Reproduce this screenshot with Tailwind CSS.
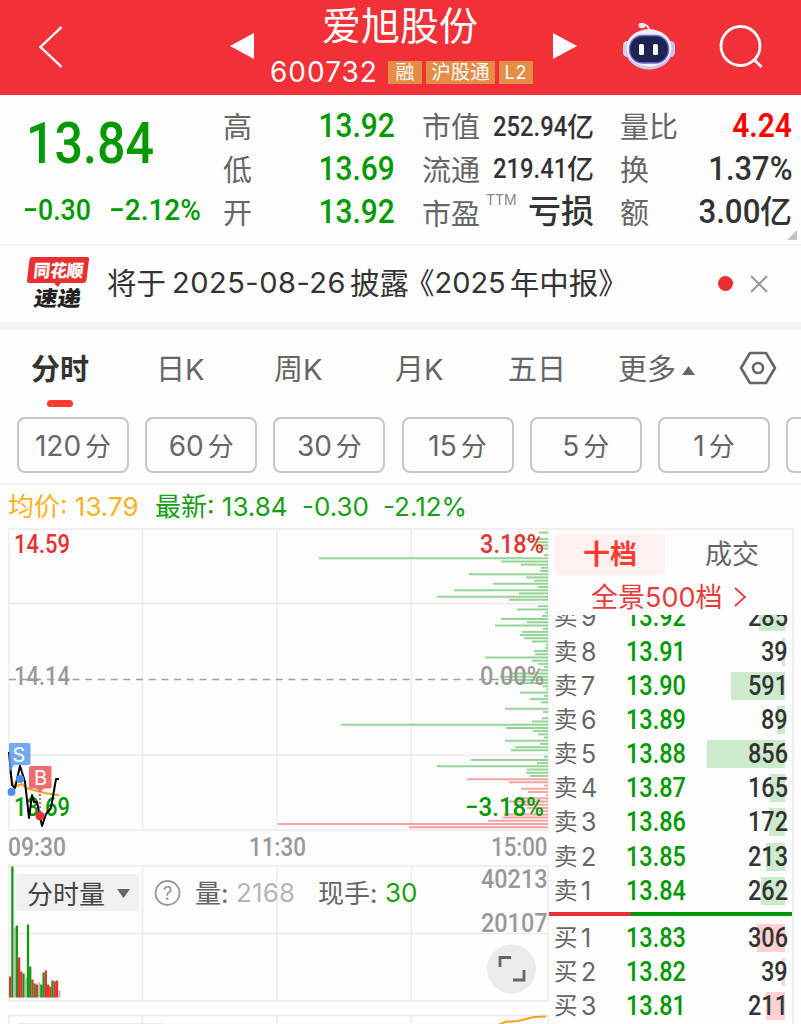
<!DOCTYPE html>
<html lang="zh-CN">

<head>
    <meta charset="UTF-8">
    <meta name="viewport" content="width=device-width, initial-scale=1.0">
    <title>爱旭股份 600732</title>
    <script src="https://cdn.jsdelivr.net/npm/@tailwindcss/browser@4"></script>
</head>

<body class="w-[801px] h-[1024px] overflow-hidden bg-[#fdfdfd] text-[#666] font-['Inter','Noto_Sans_CJK_SC',sans-serif] whitespace-nowrap">
    <!-- Header -->
    <header class="h-[95px] bg-[#f23038] text-white flex">
        <div class="w-[230px] pl-[38px] pt-[25px]">
            <svg class="w-6 h-11" viewBox="0 0 24 44" fill="none" stroke="currentColor" stroke-width="2.4">
                <path d="M23.500 2 2.500 22 23.500 42"></path>
            </svg>
        </div>
        <svg class="w-6 h-7 mt-8" viewBox="0 0 24 28" fill="currentColor">
            <path d="M0 14 24 1V27Z"></path>
        </svg>
        <div class="w-[299px] flex flex-col items-center">
            <h1 class="text-[39px] leading-[52px] h-[50px] ml-[-7px]">爱旭股份</h1>
            <div class="flex items-center h-11 self-start pl-4">
                <span class="w-[118px] text-[28px] leading-[44px] tracking-[1px]">600732</span>
                <span class="w-[34px] h-[23px] leading-[23px] text-center text-[19px] bg-[#e38d46]">融</span>
                <span class="w-[69px] h-[23px] leading-[23px] text-center text-[19.500px] bg-[#e38d46] ml-1">沪股通</span>
                <span class="w-[34px] h-[23px] leading-[23px] text-center text-[18px] tracking-[1px] bg-[#e38d46] ml-1">L2</span>
            </div>
        </div>
        <svg class="w-6 h-7 mt-8" viewBox="0 0 24 28" fill="currentColor">
            <path d="M0 1 24 14 0 27Z"></path>
        </svg>
        <!-- Assistant robot -->
        <svg class="w-[52px] h-[50px] ml-[46px] mt-[21px]" viewBox="0 0 52 50">
            <path d="M19 4Q26 3 26 10" fill="none" stroke="#f1ecfa" stroke-width="2"></path>
            <ellipse cx="19" cy="4.500" rx="3.500" ry="2.800" fill="#e9e2f8"></ellipse>
            <rect x="0" y="20" width="10" height="16" rx="4.500" fill="#d5d2f2"></rect>
            <rect x="42" y="20" width="10" height="16" rx="4.500" fill="#c5c2ee"></rect>
            <ellipse cx="26" cy="28.500" rx="23.500" ry="20" fill="#c9c7ee"></ellipse>
            <ellipse cx="26" cy="27" rx="22.500" ry="18.800" fill="#f1effb"></ellipse>
            <rect x="6.500" y="14.500" width="39" height="27.500" rx="13" fill="#1c2450" stroke="#7568e0" stroke-width="1.300"></rect>
            <rect x="16" y="23" width="5" height="11" rx="1.500" fill="#fff"></rect>
            <rect x="30" y="23" width="5" height="11" rx="1.500" fill="#fff"></rect>
        </svg>
        <svg class="w-11 h-11 ml-11 mt-[25px]" viewBox="0 0 44 44" fill="none" stroke="currentColor" stroke-width="2.800">
            <circle cx="21.500" cy="21" r="19.500"></circle>
            <path d="M34.500 34 42.500 42"></path>
        </svg>
    </header>

    <!-- Quote summary -->
    <section class="relative h-[151px] border-b-2 border-[#f1f1f1] flex text-[29px] leading-[43px]">
        <div class="w-[223px] pl-[23px] font-['Roboto'] font-medium text-[#009900]">
            <div class="pt-[9px] pl-[3px] h-[94px] leading-[80px] text-[57px]"><span class="inline-block origin-left scale-x-[.88]">13.84</span></div>
            <div class="flex h-[43px] text-[29px]">
                <span class="w-[86px]"><span class="inline-block origin-left scale-x-[.92]">−0.30</span></span>
                <span class="inline-block origin-left scale-x-[.965]">−2.12%</span>
            </div>
        </div>
        <div class="w-[172px] pt-[9px]">
            <div class="flex justify-between"><span class="pt-0.5 h-[43px]">高</span><span class="font-['Roboto'] font-medium text-[34px] text-[#009900] origin-right scale-x-[.88]">13.92</span></div>
            <div class="flex justify-between"><span class="pt-0.5 h-[43px]">低</span><span class="font-['Roboto'] font-medium text-[34px] text-[#009900] origin-right scale-x-[.88]">13.69</span></div>
            <div class="flex justify-between"><span class="pt-0.5 h-[43px]">开</span><span class="font-['Roboto'] font-medium text-[34px] text-[#009900] origin-right scale-x-[.88]">13.92</span></div>
        </div>
        <div class="w-[172px] ml-[27px] pt-2.5">
            <div class="flex h-[43px]"><span class="mr-auto pt-px">市值</span><span class="pt-px font-['Roboto'] font-medium text-[27px] text-[#333] origin-right scale-x-[.88]">252.94</span><span class="text-[27px] font-medium text-[#333] pt-px">亿</span></div>
            <div class="flex h-[43px]"><span class="mr-auto pt-px">流通</span><span class="font-['Roboto'] font-medium text-[27px] text-[#333] origin-right scale-x-[.88]">219.41</span><span class="text-[27px] font-medium text-[#333]">亿</span></div>
            <div class="flex h-[43px]"><span class="pt-0.5">市盈</span><span class="text-[14px] leading-[18px] ml-1.5 -mr-2 text-[#888]">TTM</span><span class="ml-auto -mt-px text-[33px] font-medium text-[#333]">亏损</span></div>
        </div>
        <div class="w-[172px] ml-[26px] pt-[9px]">
            <div class="flex h-[43px]"><span class="mr-auto pt-0.5">量比</span><span class="font-['Roboto'] font-semibold text-[34px] text-[#ff0000] origin-right scale-x-[.88]">4.24</span></div>
            <div class="flex h-[43px]"><span class="mr-auto pt-0.5">换</span><span class="font-['Roboto'] font-medium text-[34px] text-[#333] origin-right scale-x-[.91]">1.37%</span></div>
            <div class="flex h-[43px]"><span class="mr-auto pt-0.5">额</span><span class="font-['Roboto'] font-medium text-[34px] text-[#333] origin-right scale-x-[.92]">3.00</span><span class="text-[32px] font-medium text-[#333]">亿</span></div>
        </div>
        <svg class="absolute right-1 bottom-1 w-2.5 h-2.5" viewBox="0 0 10 10" fill="#c4c4c4">
            <path d="M10 0V10H0Z"></path>
        </svg>
    </section>

    <!-- Announcement -->
    <section class="h-[84px] border-b-[8px] border-[#f3f3f3] flex items-center pb-[1px]">
        <svg class="w-[64px] h-[54px] ml-[26px] mt-[-2px]" viewBox="0 0 64 54" font-family="Noto Sans CJK SC" font-weight="900">
            <path d="M6 1H61Q63.500 1 63 3.500L60.500 24Q60 27 57 27H35L31.500 31 28 27H3Q.500 27 1 24L3.500 3.500Q4 1 6 1Z" fill="#e93030"></path>
            <text transform="translate(7 20.500) skewX(-6)" font-size="17.500" fill="#fff" textLength="50" lengthAdjust="spacingAndGlyphs">同花顺</text>
            <text transform="translate(7 49.500) skewX(-9)" font-size="21" fill="#222" textLength="47" lengthAdjust="spacingAndGlyphs">速递</text>
        </svg>
        <p class="ml-[17px] text-[29.500px] text-[#333] flex"><span>将于</span><span class="ml-1.5 text-[29px] tracking-[0.5px]">2025-08-26</span><span class="ml-1">披露</span><span class="-ml-1">《</span><span class="text-[29px]">2025</span><span class="ml-1">年中报》</span></p>
        <span class="ml-auto w-[15px] h-[15px] rounded-full bg-[#e93030]"></span>
        <svg class="w-[18px] h-[18px] ml-[17px] mr-[33px]" viewBox="0 0 18 18" fill="none" stroke="#999" stroke-width="2">
            <path d="M1 1 17 17M17 1 1 17"></path>
        </svg>
    </section>

    <!-- Period tabs -->
    <nav class="h-[76px] flex text-[29px] leading-[80px]">
        <div class="relative w-[126px] pl-[31px] font-bold text-[#333]">分时<span class="absolute left-[47px] top-[70px] w-[26px] h-[7px] rounded-full bg-[#ff3b30]"></span></div>
        <div class="w-[148px] pl-[30px]">日K</div>
        <div class="w-[121px]">周K</div>
        <div class="w-[113px]">月K</div>
        <div class="w-[110px]">五日</div>
        <div class="flex items-center h-20">更多
            <svg class="w-[13px] h-[9px] ml-1.5" viewBox="0 0 13 9" fill="#666"><path d="M6.500 0 13 9H0Z"></path></svg>
        </div>
        <svg class="w-[38px] h-[34px] ml-11 mt-[21px]" viewBox="0 0 38 34" fill="none" stroke="#666" stroke-width="2.600" stroke-linejoin="round">
            <path d="M11 2H27L36 17 27 32H11L2 17Z"></path>
            <circle cx="19" cy="17" r="5"></circle>
        </svg>
    </nav>

    <!-- Minute chips -->
    <div class="h-[79px] overflow-hidden border-b-2 border-[#f1f1f1] pl-[17px] pt-[11px] flex gap-[16.2px] text-[28px] leading-[54px] text-center">
        <div class="shrink-0 w-[112px] h-14 border-2 border-[#c6c6c6] rounded-lg">120<span class="ml-1 text-[26px]">分</span></div>
        <div class="shrink-0 w-[112px] h-14 border-2 border-[#c6c6c6] rounded-lg">60<span class="ml-1 text-[26px]">分</span></div>
        <div class="shrink-0 w-[112px] h-14 border-2 border-[#c6c6c6] rounded-lg">30<span class="ml-1 text-[26px]">分</span></div>
        <div class="shrink-0 w-[112px] h-14 border-2 border-[#c6c6c6] rounded-lg">15<span class="ml-1 text-[26px]">分</span></div>
        <div class="shrink-0 w-[112px] h-14 border-2 border-[#c6c6c6] rounded-lg">5<span class="ml-1 text-[26px]">分</span></div>
        <div class="shrink-0 w-[112px] h-14 border-2 border-[#c6c6c6] rounded-lg">1<span class="ml-1 text-[26px]">分</span></div>
        <div class="w-[15px] h-14 border-2 border-r-0 border-[#c6c6c6] rounded-l-lg"></div>
    </div>

    <!-- Price line -->
    <div class="h-[43px] pl-2 flex text-[26px] leading-[44px] text-[#16a016]">
        <span class="w-[147px] text-[#fdb022]">均价: 13.79</span>
        <span class="w-[147px]">最新: 13.84</span>
        <span class="w-[81px]">-0.30</span>
        <span>-2.12%</span>
    </div>

    <main class="flex h-[496px]">
        <!-- Charts -->
        <svg class="w-[549px] h-[496px] shrink-0" viewBox="0 528 549 496" font-family="Roboto" font-weight="500" font-size="26">
            <g fill="none" stroke="#ebebeb" stroke-width="1.500">
                <path d="M9 529H548V830H9ZM9 603.500H548M9 755H548M142.500 529V830M277 529V830M411.500 529V830"></path>
                <path d="M9 866H548V1001H9ZM9 933.500H548M142.500 866V1001M277 866V1001M411.500 866V1001"></path>
                <path d="M9 1030V1015.500H548V1030M142.500 1015V1024M277 1015V1024M411.500 1015V1024"></path>
            </g>
            <path d="M9 679.500H548" stroke="#a0a0a0" stroke-width="1.500" stroke-dasharray="7 5.700"></path>
            <g id="depth" stroke-width="2"></g>
            <g>
                <text x="14" y="553" fill="#e93030" textLength="56" lengthAdjust="spacingAndGlyphs">14.59</text>
                <text x="14" y="684.500" fill="#999" textLength="56" lengthAdjust="spacingAndGlyphs">14.14</text>
                <text x="14" y="815.500" fill="#009900" textLength="56" lengthAdjust="spacingAndGlyphs">13.69</text>
                <text x="480" y="553" fill="#e93030" textLength="64" lengthAdjust="spacingAndGlyphs">3.18%</text>
                <text x="480" y="684.500" fill="#999" textLength="64" lengthAdjust="spacingAndGlyphs">0.00%</text>
                <text x="465" y="815.500" fill="#009900" textLength="79" lengthAdjust="spacingAndGlyphs">−3.18%</text>
            </g>
            <g fill="#999">
                <text x="8" y="856" textLength="58" lengthAdjust="spacingAndGlyphs">09:30</text>
                <text x="249" y="856" textLength="57" lengthAdjust="spacingAndGlyphs">11:30</text>
                <text x="491" y="856" textLength="56.500" lengthAdjust="spacingAndGlyphs">15:00</text>
                <text x="481" y="887.500" textLength="66.500" lengthAdjust="spacingAndGlyphs">40213</text>
                <text x="481" y="932" textLength="66.500" lengthAdjust="spacingAndGlyphs">20107</text>
            </g>

            <!-- Intraday line with trade markers -->
            <g fill="none" stroke-linejoin="round" stroke-width="2">
                <path d="M10 772 13 784 17 786 22 784 26 788 33 790 41 792 45 793 50 794 59 795" stroke="#ff9f1c"></path>
                <path d="M9 752 12 785 15 788 20 766 25 782 29 818 32 795 34 802 37 802 42 826 46 814 51 808 56 779 59 779" stroke="#000"></path>
            </g>
            <path d="M40 790V816" stroke="#e93030" stroke-width="1.500" stroke-dasharray="2 2"></path>
            <circle cx="11.500" cy="792" r="4" fill="#4c8df0"></circle>
            <circle cx="20" cy="779" r="4" fill="#4c8df0"></circle>
            <circle cx="40" cy="816" r="4.500" fill="#e03535"></circle>
            <path d="M10 743H29Q30.500 743 30.500 744.500V763.500Q30.500 765 29 765H14L9 773V744.500Q9 743 10 743Z" fill="#5b9bf0" fill-opacity=".85"></path>
            <path d="M30.500 766H50Q51.500 766 51.500 767.500V787Q51.500 788.500 50 788.500H44L40 792 36 788.500H30.500Q29 788.500 29 787V767.500Q29 766 30.500 766Z" fill="#ee6468" fill-opacity=".95"></path>
            <g font-family="Inter" font-weight="400" font-size="20" fill="#fff" text-anchor="middle">
                <text x="19" y="761.500">S</text>
                <text x="40.500" y="784.500">B</text>
            </g>

            <!-- Volume -->
            <g id="volume"></g>
            <rect x="16" y="874" width="123" height="37" rx="3" fill="#f0f0f0"></rect>
            <g font-family="Inter, Noto Sans CJK SC" font-weight="400" font-size="26" fill="#666">
                <text x="27" y="903.500" fill="#444">分时量</text>
                <path d="M117 889H130L123.500 898Z"></path>
                <circle cx="167.500" cy="893" r="12" fill="none" stroke="#999" stroke-width="1.800"></circle>
                <text x="167.500" y="900" font-size="19" fill="#999" text-anchor="middle">?</text>
                <text x="195" y="902.500">量:</text>
                <text x="236" y="902" fill="#b5b5b5" textLength="59">2168</text>
                <text x="318" y="902.500">现手:</text>
                <text x="385" y="902" fill="#16a016">30</text>
            </g>
            <circle cx="511.500" cy="969" r="24.500" fill="#ebebeb"></circle>
            <path d="M500 967V957.500H511M513 980H524V970" fill="none" stroke="#666" stroke-width="2.800"></path>
            <path d="M496 1026 505 1022 518 1021 534 1017 546 1016.500" fill="none" stroke="#ff9f1c" stroke-width="2"></path>
            <path d="M18 1023.500H163" stroke="#ebebeb"></path>
        </svg>

        <!-- Order book -->
        <aside class="w-[245px] h-[496px] overflow-hidden border-t-2 border-r-2 border-[#f0f0f0]">
            <div class="flex h-[47px] pt-1 pl-1.5 text-[27px] leading-[41px]">
                <span class="shrink-0 w-[110px] h-[41px] rounded bg-[#fff1f0] text-center font-bold text-[#ff3b30]">十档</span>
                <span class="pl-10">成交</span>
            </div>
            <div class="h-[38px] pl-[42px] flex items-center text-[27px] leading-[38px] text-[#ea3a3c]"><span class="h-[35px]">全景500档</span>
                <svg class="w-3 h-5 ml-3 mt-0.5" viewBox="0 0 12 20" fill="none" stroke="currentColor" stroke-width="1.800"><path d="M1 1 11 10 1 19"></path></svg>
            </div>
            <div class="h-[297px] overflow-hidden flex flex-col justify-end" id="asks"></div>
            <div class="flex h-1"><span class="w-[82px] bg-[#e93030]"></span><span class="grow bg-[#009900]"></span></div>
            <div class="pt-[5px]" id="bids"></div>
        </aside>
    </main>

    <script>
        // [name, level, price, volume, bar width]
        const asks = [
            ['卖', 9, '13.92', 285, 26], ['卖', 8, '13.91', 39, 3], ['卖', 7, '13.90', 591, 54],
            ['卖', 6, '13.89', 89, 8], ['卖', 5, '13.88', 856, 78], ['卖', 4, '13.87', 165, 15],
            ['卖', 3, '13.86', 172, 16], ['卖', 2, '13.85', 213, 19], ['卖', 1, '13.84', 262, 24]
        ];
        const bids = [['买', 1, '13.83', 306, 28], ['买', 2, '13.82', 39, 3], ['买', 3, '13.81', 211, 19]];

        const row = (r, color) => `
            <div class="relative flex shrink-0 h-[34.2px] pl-[5px] pr-1 text-[25px] leading-[34px]">
                <span class="absolute right-[7px] top-[3px] h-7 ${color}" style="width:${r[4]}px"></span>
                <span class="relative w-[27px] text-[23.500px]">${r[0]}</span>
                <span class="relative w-[45px]">${r[1]}</span>
                <span class="relative font-['Roboto'] font-medium text-[27px] text-[#009900] origin-left scale-x-[.87]">${r[2]}</span>
                <span class="relative ml-auto font-['Roboto'] font-medium text-[27px] text-[#333] origin-right scale-x-[.87]">${r[3]}</span>
            </div>`;
        document.getElementById('asks').innerHTML = asks.map(r => row(r, 'bg-[#cbebcc]')).join('') + '<div class="shrink-0 h-1"></div>';
        document.getElementById('bids').innerHTML = bids.map(r => row(r, 'bg-[#fdd0d1]')).join('');

        // Order depth: bar lengths by price step, 0 means no order
        const depth = [9, 0, 22, 12, 14, 12, 0, 4, 229, 47, 27, 7, 8, 79, 22, 14, 55, 10, 94, 29, 111, 39, 0, 10, 31, 3, 6, 47, 21, 53,
            5, 26, 28, 24, 16, 2, 3, 14, 13, 63, 16, 10, 4, 8, 38, 48, 38, 28, 5, 2, 28, 4, 18, 7, 0, 43, 5, 0, 6, 16,
            207, 42, 15, 10, 4, 43, 8, 33, 37, 0, 4, 77, 11, 111, 21, 22, 18, 81, 39, 4, 27, 20, 2, 31, 39, 34, 21, 12, 44, 45, 60, 270, 139];
        document.getElementById('depth').innerHTML = depth.map((w, i) => w
            ? `<path d="M${548 - w} ${532.600 + i * 3.202}H548" stroke="${i < 77 ? '#94d494' : '#f5a3a5'}"/>` : '').join('');

        // Minute volume: [height, colour]
        const g = '#129a12', r = '#e93030', s = '#bbb';
        const volume = [[21, r], [131, g], [70, s], [72, g], [40, r], [26, r], [24, g], [20, s], [73, g], [31, g], [18, r], [14, g],
            [13, r], [15, s], [13, g], [25, g], [27, r], [13, r], [11, r], [17, g], [16, r], [17, r], [7, s]];
        document.getElementById('volume').innerHTML = volume.map(([h, c], i) =>
            `<rect x="${9 + i * 2.230}" y="${997.500 - h}" width="2.300" height="${h}" fill="${c}"/>`).join('');
    </script>
</body>

</html>
